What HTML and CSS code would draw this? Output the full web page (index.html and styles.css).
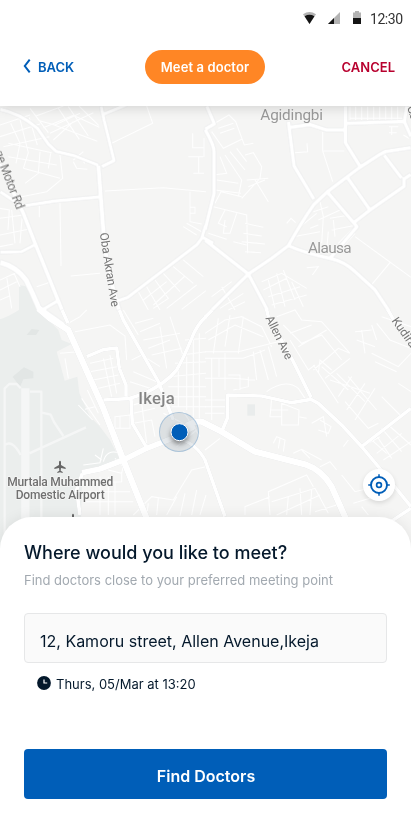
FILE: index.html
```html
<!DOCTYPE html>
<html lang="en">
<head>
<meta charset="utf-8">
<title>Meet a doctor</title>
<meta name="viewport" content="width=device-width, initial-scale=1">
<link rel="stylesheet" href="styles.css">
</head>
<body>
<div class="screen">
  <header class="top">
    <div class="status">
      <svg class="wifi" width="13" height="12" viewBox="0 0 13 12"><path fill="#b3b3b3" d="M0 2.200Q6.500-2 13 2.200L6.500 12z"/><path fill="#141414" d="M1.600 4.200Q6.500 1.500 11.400 4.200L6.500 12z"/></svg>
      <svg class="signal" width="12" height="12" viewBox="0 0 12 12"><path fill="#b3b3b3" d="M12 0v12H0z"/><path fill="#141414" d="M6 6v6H0z"/></svg>
      <svg class="battery" width="8" height="13" viewBox="0 0 8 13"><path fill="#b3b3b3" d="M0 1.500h2V0h4v1.500h2V7H0z"/><path fill="#141414" d="M0 7h8v6H0z"/></svg>
      <span class="time">12:30</span>
    </div>
    <nav class="nav">
      <a class="back"><svg width="8" height="14" viewBox="0 0 8 14"><path d="M6.700.7 1.800 7l4.900 6.300" fill="none" stroke="#005eb8" stroke-width="2"/></svg><span>BACK</span></a>
      <span class="pill">Meet a doctor</span>
      <a class="cancel">CANCEL</a>
    </nav>
  </header>
  <main class="map">
    <svg class="tiles" width="411" height="450" viewBox="0 18 1233 1350">
      <rect y="18" width="1233" height="1350" fill="#f5f5f4"/>
      <!-- airport grounds -->
      <path fill="#ebeeed" d="M0 658Q25 650 57 630V556L76 558Q98 585 110 628L150 665 175 690 185 720 215 732 170 755 180 790 194 842 232 830 238 880 270 950 300 980 330 1020 358 1075 300 1115 247 1120 240 1368H0z"/>
      <path fill="#e2e6e5" d="M80 705 95 687 118 690 108 705zM38 830 72 802 100 815 100 835 70 838 60 860z"/>
      <path fill="#e9ecec" d="M742 913h23v34h-23z"/>
      <g class="runway">
        <path d="M76 865V1368" stroke-width="25"/>
        <path d="M14 1368V865L28 852H50L62 865M90 875H124V1368M126 938 152 944 162 966 190 1008M14 1035Q38 1018 62 1065M88 1060 258 982" stroke-width="7"/>
      </g>
      <!-- side streets -->
      <g class="minor">
        <path d="M90 25 118 62 165 75 240 40M108 48 190 18M130 83 220 46 298 82M150 100 280 38M155 72 292 124M175 25 238 118M205 20 265 108M237 18 296 76M160 120 220 65M145 98 120 65M0 75 90 45M0 110 120 72M10 140 148 110M32 70 60 130 48 190M60 58 85 158 70 205M88 53 112 135M25 130 155 158M25 170 170 195M70 205 180 235M180 165 188 235 140 275 65 290M120 155 115 220 75 250M152 160 145 205M220 180 250 155M220 185 230 205 262 208M238 170 255 190M0 325 28 330 24 390M0 355 70 345M0 405 85 388M35 330 45 430M66 355 60 430M0 440 40 432M118 318V352M180 310 183 498M212 528 300 520M315 273 490 263 618 275M335 130 458 70 440 18M110 560 150 547M0 540 48 518M0 570 50 545M20 530 35 625M42 520 60 560M0 600 28 588"/>
        <path d="M578 100V143H610M565 170H610M596 170V220M580 220H612M612 115V170M570 275V365L605 372M570 322H585V340H570M550 380 590 405M560 370 605 395M415 575 445 630M440 560 480 630M465 540 505 595 460 625M490 520 540 575M520 500 580 550M550 480 610 530M430 600 500 545M460 615 555 528M500 625 590 555M545 628 618 572"/>
        <path transform="translate(615 0)" d="M15 78 72 45 92 65 118 135 145 130M20 95 55 145 110 118M40 85 85 70M45 100 88 85M45 170 65 220 25 225M60 165 110 240 100 290M75 155 120 210M95 145 125 185M120 165 145 158 170 200 165 235 110 295M125 240 190 235M130 260 180 240M150 240 190 305M35 240 100 250M30 270 108 280M30 310 48 275 110 290M25 320 125 345 128 460M60 330 40 370 65 380M95 340 75 400 55 400 60 360M10 400 65 418M120 370 175 382M115 400 170 408M110 425 180 432M85 425 125 435M120 455 168 458M270 158 308 155 306 130M353 95V153L383 245M355 153H418M345 305 355 350 350 430M325 335 370 320M340 360 405 330M375 355 435 345M380 390 455 375M370 395 365 450M280 385 335 340M265 410 345 395M385 360 390 410M315 385 340 375M245 370 258 355 272 368M400 430 440 390M410 445 450 400M450 410 618 532M555 488 495 560M305 503 340 500 322 525M435 20V60M452 20V60M470 20V60M488 20V60M506 20V60M524 20V60M542 20V60M560 20V60M578 20V60M435 55H600M552 80H580M552 98H575M560 80V105M595 105 612 115M170 545 230 520 305 565M175 570 245 535M190 590 285 560M200 615 305 585M210 625 190 540M240 620 215 520M270 600 235 510M295 620 260 545M50 560 90 630M20 590 80 545M45 625 115 580M70 630 120 605"/>
        <path transform="translate(0 630)" d="M205 40 240 20 260 0M225 65 330 45 375 78 380 150M270 160 340 145M270 185 350 170M280 210 355 195M295 235 360 220M310 145 335 260M330 135 350 250M395 150 425 135 480 170M415 75 370 0M405 40 460 25M420 65 480 40M430 90 540 70M445 115 510 90M455 135 545 115M480 50 500 175M510 20 550 140M400 185 470 215M390 215 450 235M400 285 450 270M400 310 465 295M345 320 390 315V355H345ZM360 320V355M400 340 455 330 465 380M425 280 440 400M245 265 300 345M235 285 278 330M262 240 295 310M255 298 285 290M180 130 235 125M195 145 205 205M505 200 618 190M525 160 618 155M545 135 618 125M555 90 618 85M580 80V340M598 70V330M560 140V300M535 175V290M505 230H618M510 260H618M515 290H618M490 310 590 360 530 410M550 305 600 380M250 465 300 458 310 415M285 435 305 450M310 455Q320 415 360 430M325 480 365 490 378 435M345 445 370 470M250 520 365 515V485M300 500V615M325 500V615M345 515V615M255 545H390M255 575H400M400 615 455 560 520 570 575 480 618 470M440 615 445 580M470 615 475 565M500 615 530 560M540 618 555 550M575 615 590 540M600 615 618 555"/>
        <path transform="translate(615 630)" d="M0 70 60 30 110 20 170 50 200 110M10 90 90 45 175 80M0 125H100L240 90M0 145H115L180 120M20 145V330M42 145V200M60 130V240M0 205H80L150 210M100 130 115 20M75 15 60 110M40 25 25 130M145 125 155 210M165 120 190 210M190 110 215 200M70 195H105V240M85 240 130 230V200M0 270H60M0 290H60M0 310H58M185 245Q240 205 280 235L300 265M200 265 195 320H230V345H280L282 300 230 280V345M195 300H250M280 320 305 325M255 90 310 180 330 165M215 20 270 0 290 30 350 35 435 130M235 45 290 100 350 75 410 150M255 70 320 45M280 110 365 60M325 180 400 115 435 130M340 190 345 150 380 180M360 205 435 145M325 165 400 280M350 170 430 240M375 210 495 250M395 190 480 275M430 200 515 300M400 260 440 200M425 300 480 220M450 330 510 235M420 275 490 355 520 340M450 65 500 60M470 60 480 130M455 90 510 110M500 45 515 90M530 20 618 50M515 40 555 90 618 115M500 130 580 170 618 130M510 155 575 185M530 260 585 315M580 220 618 245M345 330 378 350 370 370 340 360M320 340 355 320 365 380M205 400 215 380 240 390 235 425M225 385 220 415M265 430 290 418 350 450M290 420 315 445M345 470 375 455 395 480M415 410 430 390M495 385 545 430M510 370 560 445M530 355 590 425M550 345 618 405M480 405 525 380M515 430 590 370M535 450 618 395M410 495 450 545 510 530M195 615 190 545 305 495 325 530M120 615V590L195 560M200 575 330 535 370 610M215 615 345 555M245 615 250 560M290 615 285 535M315 615 320 540M330 605 395 585M470 590 490 615M445 580 510 560M0 420 45 385"/>
      </g>
      <!-- main roads -->
      <g class="major">
        <path stroke-width="11" d="M0 28Q60 40 112 85L145 132 168 154 225 168 295 196M303 18 312 60 342 182 305 200M312 42 380 14M0 275 65 318M75 317 165 303 297 291M0 457 65 455 105 434M130 628 172 603M355 602 383 592 590 435 605 415Q612 390 617 376M605 410 640 430"/>
        <path stroke-width="14" d="M295 196 310 395Q315 490 357 630"/>
        <path stroke-width="13" d="M-10 175 70 340 107 435 186 630"/>
        <path stroke-width="17" d="M0 487Q50 500 78 540 98 580 117 625L190 676"/>
        <g transform="translate(615 0)">
          <path stroke-width="12" d="M5 18 28 72 0 88M0 88Q27 135 27 155V280L0 390M250 65 267 198 327 298M255 82 315 74 365 90H417M421 18V128L463 196M425 70 605 64M618 143 540 155 525 163 463 203 370 273 327 313Q290 365 250 437L200 475 130 522 20 630M0 420 130 522 187 630M250 437Q300 460 375 475 420 485 450 515L510 570 550 630M370 280 456 380 375 475M428 234 495 330M450 365 495 330 597 259V237L618 223M537 165 590 235M605 18 598 65 618 110"/>
        </g>
        <g transform="translate(0 630)">
          <path stroke-width="19" d="M115 -5 150 25 205 60 232 120 310 295 370 450 440 625"/>
          <path stroke-width="11" d="M186 0 204 40M358 0 370 30 475 215 520 330M618 20Q590 45 575 85 550 145 530 180 500 218 430 252L385 266 310 270M260 140 310 119 350 114 358 175 378 225V260M393 265 397 340 440 413M247 490 230 540 240 615"/>
          <path stroke-width="17" d="M246 488 300 477 370 450 440 415 530 380 585 348"/>
          <path stroke-width="10" d="M535 385Q590 400 618 455"/>
        </g>
        <g transform="translate(615 630)">
          <path stroke-width="11" d="M184 -5 190 20 265 155 318 262M50 365 67 325 68 255 170 258 260 278 318 268 340 280 415 350 470 410 520 470 618 590M470 410 618 295M0 450 60 620M550 640 618 595M0 22 22 0M548 -2 565 28 618 95"/>
          <path stroke-width="19" d="M-85 375Q-45 330-10 335L50 365 150 425 300 463Q350 480 380 530L422 625"/>
        </g>
      </g>
      <g class="labels">
        <text class="place" x="781" y="59" textLength="188">Agidingbi</text>
        <text class="place" x="924" y="458" textLength="131">Alausa</text>
        <text class="place town" x="415" y="911" textLength="109">Ikeja</text>
        <text class="street" transform="translate(299 400) rotate(81)" textLength="225">Oba Akran Ave</text>
        <text class="street" transform="translate(-18 157) rotate(69)" textLength="186">ge Motor Rd</text>
        <text class="street" transform="translate(796 654) rotate(64)" textLength="142">Allen Ave</text>
        <text class="street" transform="translate(1174 662) rotate(55)" textLength="145">Kudirat A</text>
        <text class="street" transform="translate(1221 22) rotate(72)" textLength="70">Close</text>
        <text class="airport" x="22" y="1158" textLength="318">Murtala Muhammed</text>
        <text class="airport" x="47" y="1196" textLength="267">Domestic Airport</text>
      </g>
      <path fill="#666" d="M177 1085q3-6 6 0v10l14 8v4l-14-3-1 8 6 4v3l-8-2-8 2v-3l6-4-1-8-14 3v-4l14-8z"/>
      <path fill="#666" d="M216 1245q3-7 6 0v15h-6z"/>
    </svg>
    <span class="marker"></span>
    <button class="locate" aria-label="Locate"><svg width="22" height="22" viewBox="0 0 22 22" fill="none" stroke="#005eb8"><circle cx="11" cy="11" r="8" stroke-width="1.900"/><circle cx="11" cy="11" r="2.400" stroke-width="1.700"/><path d="M11 .2V4M11 18v3.800M.2 11H4M18 11h3.800" stroke-width="1.500"/></svg></button>
  </main>
  <section class="sheet">
    <h1>Where would you like to meet?</h1>
    <p class="hint">Find doctors close to your preferred meeting point</p>
    <div class="field">12, Kamoru street, Allen Avenue,Ikeja</div>
    <div class="when"><svg width="14" height="14" viewBox="0 0 14 14"><circle cx="7" cy="7" r="6.900" fill="#04182b"/><path d="M7 3.500V7h3.200" fill="none" stroke="#fff" stroke-width="1.200"/></svg><span>Thurs, 05/Mar at 13:20</span></div>
    <button class="find">Find Doctors</button>
  </section>
</div>
</body>
</html>
```
FILE: styles.css
```css
* { box-sizing: border-box; }
body { margin: 0; font-family: Inter, sans-serif; color: #04182b; background: #fff; }
button { font: inherit; border: 0; padding: 0; }
.screen { width: 411px; height: 823px; display: flex; flex-direction: column; overflow: hidden; }
.top { position: relative; z-index: 1; height: 106px; flex: none; background: #fff; box-shadow: 0 1px 12px rgba(0, 0, 0, .16); }
.status { height: 36px; display: flex; align-items: center; justify-content: flex-end; padding-right: 9px; }
.status svg { display: block; }
.signal { margin-left: 12px; }
.battery { margin-left: 13px; margin-top: -1px; }
.time { font: 14px/16px Roboto, sans-serif; color: #333; margin-left: 9px; width: 32px; white-space: nowrap; letter-spacing: -.45px; margin-top: 1px; }
.nav { display: flex; justify-content: space-between; align-items: center; margin-top: 14px; padding: 0 16px 0 23px; height: 34px; font-size: 13px; font-weight: 600; }
.back { display: flex; align-items: center; gap: 7px; width: 122px; color: #005eb8; }
.back svg { margin-top: -3px; }
.pill { height: 34px; line-height: 35px; border-radius: 17px; background: #ff8625; color: #fff; text-align: center; width: 120px; letter-spacing: .1px; }
.cancel { width: 130px; color: #b8002e; text-align: right; }
.map { position: relative; height: 411px; flex: none; }
.tiles { display: block; }
.runway { fill: none; stroke: #f5f6f6; stroke-linejoin: round; }
.minor { fill: none; stroke: #fefefe; stroke-width: 3.2; }
.major { fill: none; stroke: #fff; stroke-linejoin: round; filter: drop-shadow(0 0 2px #d5d7d9); }
.labels { font-family: Roboto, sans-serif; }
.labels text { paint-order: stroke; stroke: #f7f7f6; stroke-width: 4px; stroke-linejoin: round; }
.place { font-size: 46px; fill: #999; }
.town { font-size: 50px; font-weight: 500; fill: #858585; }
.street { font-size: 36px; fill: #777; }
.airport { font-size: 36px; font-weight: 500; fill: #707070; }
.marker { position: absolute; left: 159px; top: 306px; width: 40px; height: 40px; border-radius: 50%; border: 1px solid rgba(0, 94, 184, .22); background: rgba(80, 105, 125, .15); }
.marker::after { content: ""; position: absolute; left: 11px; top: 11px; width: 16px; height: 16px; border-radius: 50%; border: 1px solid #fff; background: #005eb8; box-shadow: 0 3px 5px rgba(0, 0, 0, .4); transform: translate(-.5px, -.8px); }
.locate { position: absolute; left: 363px; top: 363px; width: 32px; height: 32px; border-radius: 50%; background: #fff; display: grid; place-items: center; box-shadow: 0 2px 5px rgba(0, 0, 0, .12); }
.sheet { position: relative; flex: 1; border-radius: 32px 32px 0 0; background: #fff; padding: 25px 24px 24px; display: flex; flex-direction: column; box-shadow: 0 0 14px rgba(0, 0, 0, .08); }
h1 { margin: 0; font-size: 18px; line-height: 22px; font-weight: 500; }
.hint { margin: 8px 0 0; font-size: 13px; line-height: 16px; color: #a2a9b0; }
.field { margin-top: 25px; height: 50px; border: 1px solid #e6e7e8; border-radius: 4px; background: #fafafa; padding: 3px 15px 0; font-size: 16px; line-height: 48px; white-space: nowrap; }
.when { display: flex; gap: 5px; padding-left: 13px; margin-top: 13px; font-size: 13px; line-height: 17px; }
.find { margin-top: auto; height: 50px; border-radius: 4px; background: #005eb8; color: #fff; font-size: 16px; font-weight: 600; padding: 4px 0 0 1px; }
```
